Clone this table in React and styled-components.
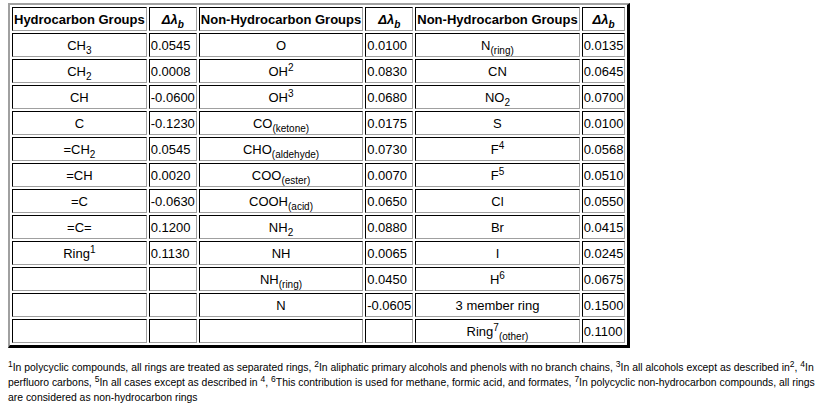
import styled, { createGlobalStyle } from 'styled-components';

const GlobalStyle = createGlobalStyle`
    body {
        margin: 0;
        background: #fff;
        color: #000;
        font-family: "Liberation Sans", Arial, sans-serif;
    }
`;

const Page = styled.div`
    padding: 3px 8px 0 8px;
`;

const Table = styled.table`
    border-collapse: separate;
    border-spacing: 2px;
    border-style: solid;
    border-width: 2px 3px 3px 2px;
    border-color: #a0a0a0 #000 #000 #a0a0a0;
    font-size: 13px;
`;

const Row = styled.tr`
    height: 24px;
`;

const HeadCell = styled.th`
    padding: 1px;
    border: 1px solid;
    border-color: #000 #a0a0a0 #a0a0a0 #000;
    font-weight: bold;
    text-align: center;
    vertical-align: middle;
    white-space: nowrap;
    width: ${({ $w }) => $w}px;
`;

const Cell = styled.td`
    padding: 1px;
    border: 1px solid;
    border-color: #000 #a0a0a0 #a0a0a0 #000;
    text-align: ${({ $value }) => ($value ? 'left' : 'center')};
    vertical-align: middle;
    white-space: nowrap;
`;

const Delta = styled.span`
    font-style: italic;
`;

const Sub = styled.sub`
    font-size: 10px;
    vertical-align: sub;
    line-height: 0;
`;

const Sup = styled.sup`
    font-size: 10px;
    vertical-align: super;
    line-height: 0;
`;

const Notes = styled.div`
    margin-top: 12px;
    font-size: 10.4px;
    line-height: 15px;
    width: 824px;

    sup {
        font-size: 8.5px;
        line-height: 0;
        vertical-align: 4px;
    }
`;

const widths = [130, 43, 159, 43, 159, 39];

const headers = ['Hydrocarbon Groups', 'dl', 'Non-Hydrocarbon Groups', 'dl', 'Non-Hydrocarbon Groups', 'dl'];

const rows = [
    [<>CH<Sub>3</Sub></>, '0.0545', 'O', '0.0100', <>N<Sub>(ring)</Sub></>, '0.0135'],
    [<>CH<Sub>2</Sub></>, '0.0008', <>OH<Sup>2</Sup></>, '0.0830', 'CN', '0.0645'],
    ['CH', '-0.0600', <>OH<Sup>3</Sup></>, '0.0680', <>NO<Sub>2</Sub></>, '0.0700'],
    ['C', '-0.1230', <>CO<Sub>(ketone)</Sub></>, '0.0175', 'S', '0.0100'],
    [<>=CH<Sub>2</Sub></>, '0.0545', <>CHO<Sub>(aldehyde)</Sub></>, '0.0730', <>F<Sup>4</Sup></>, '0.0568'],
    ['=CH', '0.0020', <>COO<Sub>(ester)</Sub></>, '0.0070', <>F<Sup>5</Sup></>, '0.0510'],
    ['=C', '-0.0630', <>COOH<Sub>(acid)</Sub></>, '0.0650', 'Cl', '0.0550'],
    ['=C=', '0.1200', <>NH<Sub>2</Sub></>, '0.0880', 'Br', '0.0415'],
    [<>Ring<Sup>1</Sup></>, '0.1130', 'NH', '0.0065', 'I', '0.0245'],
    ['', '', <>NH<Sub>(ring)</Sub></>, '0.0450', <>H<Sup>6</Sup></>, '0.0675'],
    ['', '', 'N', '-0.0605', '3 member ring', '0.1500'],
    ['', '', '', '', <>Ring<Sup>7</Sup><Sub>(other)</Sub></>, '0.1100'],
];

const App = () => {
    return (
        <Page>
            <GlobalStyle />
            <Table>
                <tbody>
                    <Row>
                        {headers.map((h, i) => (
                            <HeadCell key={i} $w={widths[i]}>
                                {h === 'dl' ? (
                                    <Delta>Δλ<Sub>b</Sub></Delta>
                                ) : h}
                            </HeadCell>
                        ))}
                    </Row>
                    {rows.map((row, r) => (
                        <Row key={r}>
                            {row.map((c, i) => (
                                <Cell key={i} $value={i % 2 === 1}>{c}</Cell>
                            ))}
                        </Row>
                    ))}
                </tbody>
            </Table>
            <Notes>
                <sup>1</sup>In polycyclic compounds, all rings are treated as separated rings, <sup>2</sup>In aliphatic primary alcohols and phenols with no branch chains, <sup>3</sup>In all alcohols except as described in<sup>2</sup>, <sup>4</sup>In perfluoro carbons, <sup>5</sup>In all cases except as described in <sup>4</sup>, <sup>6</sup>This contribution is used for methane, formic acid, and formates, <sup>7</sup>In polycyclic non-hydrocarbon compounds, all rings are considered as non-hydrocarbon rings
            </Notes>
        </Page>
    );
};

export default App;
